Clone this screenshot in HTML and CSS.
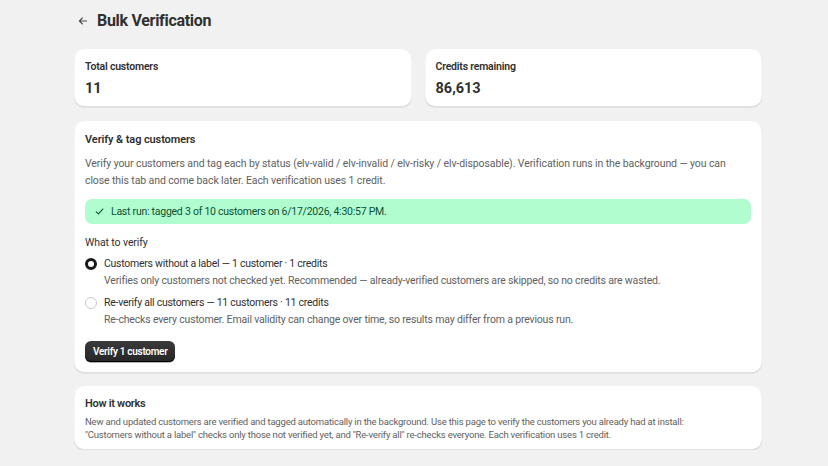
FILE: index.html
```html
<!DOCTYPE html>
<html lang="en">
<head>
    <meta charset="UTF-8">
    <meta name="viewport" content="width=device-width, initial-scale=1.0">
    <title>Bulk Verification</title>
    <link rel="stylesheet" href="styles.css">
</head>
<body>
    <div class="page">
        <header class="page-header">
            <a href="#" class="back-link" aria-label="Back">
                <svg width="12" height="12" viewBox="0 0 20 20" fill="none">
                    <path d="M16 10H4M9 5l-5 5 5 5" stroke="#4a4a4a" stroke-width="1.8" stroke-linecap="round" stroke-linejoin="round"/>
                </svg>
            </a>
            <h1>Bulk Verification</h1>
        </header>

        <section class="stats">
            <div class="card stat-card">
                <h3>Total customers</h3>
                <p class="stat-value">11</p>
            </div>
            <div class="card stat-card">
                <h3>Credits remaining</h3>
                <p class="stat-value">86,613</p>
            </div>
        </section>

        <section class="card main-card">
            <h2>Verify &amp; tag customers</h2>
            <p class="muted">Verify your customers and tag each by status (elv-valid / elv-invalid / elv-risky / elv-disposable). Verification runs in the background — you can close this tab and come back later. Each verification uses 1 credit.</p>

            <div class="banner">
                <svg width="11" height="11" viewBox="0 0 20 20" fill="none">
                    <path d="M4 10.5l4 4 8-9" stroke="#0c5132" stroke-width="2" stroke-linecap="round" stroke-linejoin="round"/>
                </svg>
                <span>Last run: tagged 3 of 10 customers on 6/17/2026, 4:30:57 PM.</span>
            </div>

            <fieldset class="choices">
                <legend>What to verify</legend>
                <label class="choice">
                    <input type="radio" name="scope" value="unlabeled" checked>
                    <span class="choice-text">
                        <span class="choice-label">Customers without a label — 1 customer · 1 credits</span>
                        <span class="choice-help">Verifies only customers not checked yet. Recommended — already-verified customers are skipped, so no credits are wasted.</span>
                    </span>
                </label>
                <label class="choice">
                    <input type="radio" name="scope" value="all">
                    <span class="choice-text">
                        <span class="choice-label">Re-verify all customers — 11 customers · 11 credits</span>
                        <span class="choice-help">Re-checks every customer. Email validity can change over time, so results may differ from a previous run.</span>
                    </span>
                </label>
            </fieldset>

            <div class="actions">
                <button class="btn-primary">Verify 1 customer</button>
            </div>
        </section>

        <section class="card info-card">
            <h2>How it works</h2>
            <p class="muted small">New and updated customers are verified and tagged automatically in the background. Use this page to verify the customers you already had at install: "Customers without a label" checks only those not verified yet, and "Re-verify all" re-checks everyone. Each verification uses 1 credit.</p>
        </section>
    </div>
</body>
</html>
```

FILE: styles.css
```css
body {
    margin: 0;
    background-color: #f1f1f1;
    font-family: Roboto, "Noto Sans", sans-serif;
    color: #303030;
    font-size: 10.5px;
    line-height: 17px;
    letter-spacing: -0.1px;
}

h1, h2, h3, p {
    margin: 0;
}

.page {
    width: 688px;
    margin-left: 74px;
    padding-top: 9px;
}

.page-header {
    display: flex;
    align-items: center;
    gap: 8px;
    height: 24px;
    padding-left: 3px;
}

.back-link {
    display: flex;
    align-items: center;
    justify-content: center;
    width: 12px;
    height: 12px;
}

.page-header h1 {
    font-size: 16px;
    font-weight: 700;
    line-height: 24px;
    letter-spacing: -0.3px;
}

.card {
    background-color: #fff;
    border-radius: 10px;
    box-shadow: 0 1px 0 rgba(26, 26, 26, 0.07),
        inset 0 -1px 0 rgba(0, 0, 0, 0.12),
        inset 1px 0 0 rgba(0, 0, 0, 0.04),
        inset -1px 0 0 rgba(0, 0, 0, 0.04);
}

.stats {
    display: grid;
    grid-template-columns: 1fr 1fr;
    gap: 13px;
    margin-top: 16px;
}

.stat-card {
    padding: 10px 11px 8px;
}

.stat-card h3 {
    font-size: 10.5px;
    font-weight: 600;
    line-height: 16px;
    letter-spacing: -0.2px;
}

.stat-value {
    margin-top: 4px;
    font-size: 14.5px;
    font-weight: 700;
    line-height: 20px;
    letter-spacing: 0;
}

.main-card {
    margin-top: 14px;
    padding: 10px 11px 11px;
}

.card h2 {
    font-size: 11px;
    font-weight: 600;
    line-height: 17px;
    letter-spacing: -0.1px;
}

.info-card h2 {
    letter-spacing: -0.3px;
}

.muted {
    color: #616161;
}

.main-card .muted {
    margin-top: 7px;
}

.banner {
    display: flex;
    align-items: center;
    gap: 6px;
    margin-top: 10px;
    height: 25px;
    padding: 0 9px;
    background-color: #b1fdd0;
    border-radius: 7px;
    color: #0c5132;
    letter-spacing: -0.25px;
}

.choices {
    border: none;
    margin: 10px 0 0;
    padding: 0;
}

.choices legend {
    padding: 0;
    margin-bottom: 4px;
}

.choice {
    display: flex;
    gap: 7px;
    margin-bottom: 5px;
}

.choice input {
    appearance: none;
    margin: 3px 0 0;
    width: 12px;
    height: 12px;
    border-radius: 50%;
    border: 1px solid #c9c9c9;
    background-color: #fff;
    flex-shrink: 0;
}

.choice input:checked {
    border: 3.5px solid #1a1a1a;
}

.choice-text {
    display: flex;
    flex-direction: column;
}

.choice-label {
    letter-spacing: -0.26px;
}

.choice-help {
    color: #616161;
    letter-spacing: -0.17px;
}

.actions {
    margin-top: 8px;
}

.btn-primary {
    font-family: inherit;
    font-size: 10px;
    font-weight: 600;
    letter-spacing: -0.3px;
    color: #fff;
    height: 21px;
    padding: 0 8px;
    border: none;
    border-radius: 6px;
    background: linear-gradient(#3a3a3a, #262626);
    box-shadow: inset 0 -1px 0 #000, 0 1px 0 rgba(0, 0, 0, 0.3);
}

.info-card {
    margin-top: 13px;
    padding: 9px 11px 9px;
}

.info-card .small {
    max-width: 640px;
    margin-top: 3px;
    font-size: 9.5px;
    line-height: 13px;
    letter-spacing: -0.2px;
}
```
